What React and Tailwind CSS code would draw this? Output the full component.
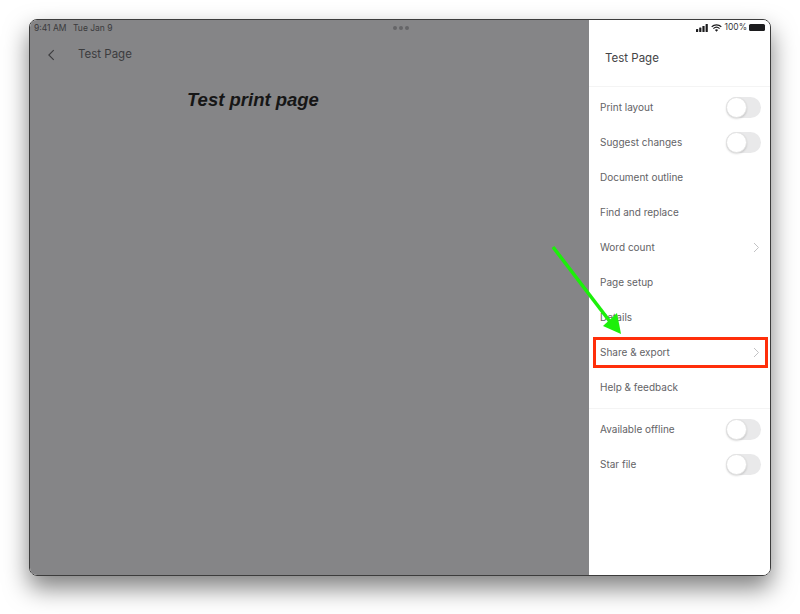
import React from 'react';

const Toggle = () => (
  <div className="w-[35px] h-[21px] rounded-full bg-[#e9e9ea] relative">
    <div className="absolute left-0 top-0 w-[21px] h-[21px] rounded-full bg-white border border-[#e2e2e2] shadow-[0_1px_2px_rgba(0,0,0,0.15)]" />
  </div>
);

const Chevron = ({ className, flip }) => (
  <svg width="7" height="11" viewBox="0 0 7 11" fill="none" className={className}>
    <path d={flip ? 'M6 1L1.5 5.5L6 10' : 'M1 1l4.5 4.5L1 10'} stroke="currentColor" strokeWidth="1" />
  </svg>
);

const Row = ({ label, right }) => (
  <div className="h-[35px] pl-[11px] pr-[9px] flex items-center justify-between text-[10px] text-[#636366]">
    <span>{label}</span>
    {right === 'toggle' && <Toggle />}
    {right === 'chevron' && <Chevron className="text-[#c2c2c4] mr-[1px]" />}
  </div>
);

export default function App() {
  return (
    <div className="relative w-[800px] h-[614px] bg-white pt-[19px] pl-[29px] overflow-hidden font-['Inter',sans-serif]">
      <div className="w-[742px] h-[557px] flex rounded-[8px] overflow-hidden border border-[#3c3c3c] shadow-[0_12px_24px_rgba(0,0,0,0.5)]">
        {/* Dimmed document */}
        <div className="w-[559px] bg-[#858587] flex flex-col">
          <div className="h-[15px] pl-[4px] pt-[1px] flex items-center text-[8.5px] text-[#3a3a3c]">
            <span className="w-[39px]">9:41 AM</span>
            <span className="w-[320px]">Tue Jan 9</span>
            <div className="flex gap-[2px]">
              <span className="w-[4px] h-[4px] rounded-full bg-[#656567]" />
              <span className="w-[4px] h-[4px] rounded-full bg-[#656567]" />
              <span className="w-[4px] h-[4px] rounded-full bg-[#656567]" />
            </div>
          </div>
          <div className="h-[40px] pl-[17px] flex items-center text-[11.5px] text-[#3c3c3e]">
            <Chevron flip className="w-[8px] h-[12px] text-[#3c3c3e]" />
            <span className="ml-[23px]">Test Page</span>
          </div>
          <h1 className="mt-[14px] ml-[157px] text-[18.5px] leading-[22px] font-bold italic text-[#161616] font-['Liberation_Sans',sans-serif]">
            Test print page
          </h1>
        </div>

        {/* Side menu */}
        <div className="w-[181px] bg-white flex flex-col">
          <div className="h-[15px] pr-[5px] flex items-center justify-end gap-[2px] text-[8.5px] text-[#3a3a3c]">
            <svg width="13" height="8" viewBox="0 0 13 8" fill="#1c1c1e">
              <rect x="0" y="5" width="2.2" height="3" rx="0.5" />
              <rect x="3.2" y="3.5" width="2.2" height="4.5" rx="0.5" />
              <rect x="6.4" y="2" width="2.2" height="6" rx="0.5" />
              <rect x="9.6" y="0" width="2.2" height="8" rx="0.5" />
            </svg>
            <svg width="11" height="8" viewBox="0 0 11 8" fill="none" stroke="#1c1c1e">
              <path d="M0.7 2.8a7 7 0 0 1 9.6 0" strokeWidth="1.2" />
              <path d="M2.4 4.6a4.6 4.6 0 0 1 6.2 0" strokeWidth="1.2" />
              <path d="M5.5 7.8L3.9 6a2.4 2.4 0 0 1 3.2 0z" fill="#1c1c1e" stroke="none" />
            </svg>
            <span>100%</span>
            <div className="w-[16px] h-[7px] rounded-[1.5px] bg-[#1c1c1e]" />
          </div>
          <div className="h-[52px] pl-[16px] pb-[4px] flex items-center border-b border-[#f4f4f4] text-[11.5px] text-[#444446]">
            Test Page
          </div>
          <div className="pt-[3px] pb-[3px] border-b border-[#f4f4f4]">
            <Row label="Print layout" right="toggle" />
            <Row label="Suggest changes" right="toggle" />
            <Row label="Document outline" />
            <Row label="Find and replace" />
            <Row label="Word count" right="chevron" />
            <Row label="Page setup" />
            <Row label="Details" />
            <Row label="Share & export" right="chevron" />
            <Row label="Help & feedback" />
          </div>
          <div className="pt-[3px]">
            <Row label="Available offline" right="toggle" />
            <Row label="Star file" right="toggle" />
          </div>
        </div>
      </div>

      {/* Red highlight box */}
      <div className="absolute left-[593px] top-[337px] w-[175px] h-[31px] border-[3px] border-[#ff2f0a]" />

      {/* Green arrow */}
      <svg className="absolute left-0 top-0" width="800" height="614" viewBox="0 0 800 614" fill="none">
        <path d="M553 247L611 323" stroke="#1cf00a" strokeWidth="3.5" />
        <path d="M621 334L603 326L617 313z" fill="#1cf00a" />
      </svg>
    </div>
  );
}
